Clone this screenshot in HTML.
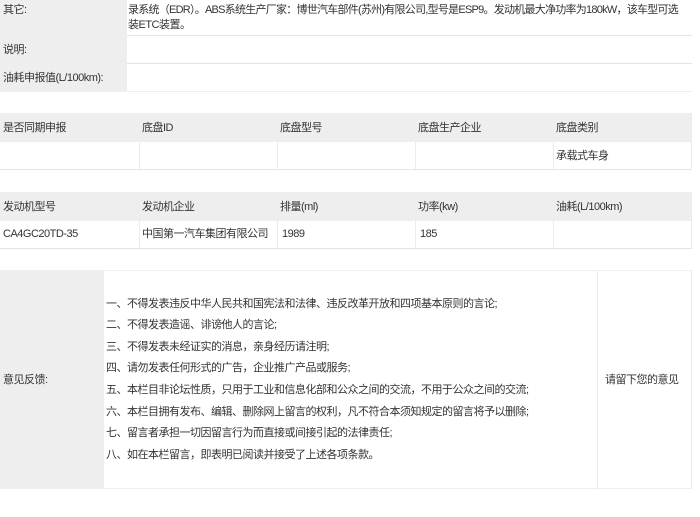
<!DOCTYPE html>
<html><head><meta charset="utf-8"><style>
*{margin:0;padding:0;box-sizing:border-box}
body{width:700px;height:517px;background:#fff;font-family:"Liberation Sans","Noto Sans CJK SC",sans-serif;font-size:11px;color:#333;position:relative;overflow:hidden}
.a{position:absolute}
.g{background:#eee}
.w{background:#fff}
.t{position:absolute;white-space:nowrap;line-height:14px;letter-spacing:-0.5px}
.hl{position:absolute;height:1px;background:#e4e4e4}
.vl{position:absolute;width:1px;background:#ebebeb}
</style></head><body>
<div class="a g" style="left:0;top:0;width:692px;height:92px"></div>
<div class="a w" style="left:127px;top:0;width:565px;height:91px"></div>
<div class="hl" style="left:127px;top:35px;width:565px"></div>
<div class="hl" style="left:127px;top:63px;width:565px"></div>
<div class="t" style="left:3px;top:3px">其它:</div>
<div class="t" style="left:128px;top:3px;letter-spacing:-0.75px">录系统（EDR）。ABS系统生产厂家：博世汽车部件(苏州)有限公司,型号是ESP9。发动机最大净功率为180kW，该车型可选</div>
<div class="t" style="left:128px;top:18px">装ETC装置。</div>
<div class="t" style="left:3px;top:43px">说明:</div>
<div class="t" style="left:3px;top:71px">油耗申报值(L/100km):</div>

<div class="a g" style="left:0;top:113px;width:692px;height:29px"></div>
<div class="hl" style="left:0;top:169px;width:692px"></div>
<div class="vl" style="left:139px;top:142px;height:27px"></div>
<div class="vl" style="left:277px;top:142px;height:27px"></div>
<div class="vl" style="left:415px;top:142px;height:27px"></div>
<div class="vl" style="left:553px;top:142px;height:27px"></div>
<div class="vl" style="left:691px;top:113px;height:57px"></div>
<div class="t" style="left:3px;top:121px">是否同期申报</div>
<div class="t" style="left:142px;top:121px">底盘ID</div>
<div class="t" style="left:280px;top:121px">底盘型号</div>
<div class="t" style="left:418px;top:121px">底盘生产企业</div>
<div class="t" style="left:556px;top:121px">底盘类别</div>
<div class="t" style="left:556px;top:149px">承载式车身</div>

<div class="a g" style="left:0;top:192px;width:692px;height:29px"></div>
<div class="hl" style="left:0;top:248px;width:692px"></div>
<div class="vl" style="left:139px;top:221px;height:27px"></div>
<div class="vl" style="left:277px;top:221px;height:27px"></div>
<div class="vl" style="left:415px;top:221px;height:27px"></div>
<div class="vl" style="left:553px;top:221px;height:27px"></div>
<div class="vl" style="left:691px;top:192px;height:57px"></div>
<div class="t" style="left:3px;top:200px">发动机型号</div>
<div class="t" style="left:142px;top:200px">发动机企业</div>
<div class="t" style="left:280px;top:200px">排量(ml)</div>
<div class="t" style="left:418px;top:200px">功率(kw)</div>
<div class="t" style="left:556px;top:200px">油耗(L/100km)</div>
<div class="t" style="left:3px;top:227px">CA4GC20TD-35</div>
<div class="t" style="left:142px;top:227px">中国第一汽车集团有限公司</div>
<div class="t" style="left:282px;top:227px">1989</div>
<div class="t" style="left:420px;top:227px">185</div>

<div class="a g" style="left:0;top:270px;width:104px;height:219px"></div>
<div class="hl" style="left:104px;top:270px;width:588px;background:#f0f0f0"></div>
<div class="hl" style="left:104px;top:488px;width:588px;background:#eee"></div>
<div class="vl" style="left:597px;top:270px;height:219px"></div>
<div class="vl" style="left:691px;top:270px;height:219px"></div>
<div class="t" style="left:3px;top:373px">意见反馈:</div>
<div class="t" style="left:605px;top:373px">请留下您的意见</div>
<div class="t" style="left:106px;top:297px">一、不得发表违反中华人民共和国宪法和法律、违反改革开放和四项基本原则的言论;</div>
<div class="t" style="left:106px;top:318px">二、不得发表造谣、诽谤他人的言论;</div>
<div class="t" style="left:106px;top:340px">三、不得发表未经证实的消息，亲身经历请注明;</div>
<div class="t" style="left:106px;top:361px">四、请勿发表任何形式的广告，企业推广产品或服务;</div>
<div class="t" style="left:106px;top:383px">五、本栏目非论坛性质，只用于工业和信息化部和公众之间的交流，不用于公众之间的交流;</div>
<div class="t" style="left:106px;top:405px">六、本栏目拥有发布、编辑、删除网上留言的权利，凡不符合本须知规定的留言将予以删除;</div>
<div class="t" style="left:106px;top:426px">七、留言者承担一切因留言行为而直接或间接引起的法律责任;</div>
<div class="t" style="left:106px;top:448px">八、如在本栏留言，即表明已阅读并接受了上述各项条款。</div>
</body></html>
